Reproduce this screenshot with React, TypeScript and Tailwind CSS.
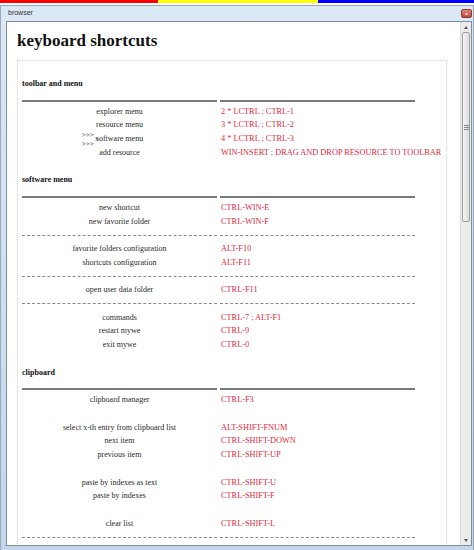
const serif = { fontFamily: '"Liberation Serif", "Times New Roman", serif' }

type Row = { kind: 'row'; label: string; keys: string; arrows?: boolean } | { kind: 'dash' } | { kind: 'blank' }

const sections: { title: string; rows: Row[] }[] = [
  {
    title: 'toolbar and menu',
    rows: [
      { kind: 'row', label: 'explorer menu', keys: '2 * LCTRL ; CTRL-1' },
      { kind: 'row', label: 'resource menu', keys: '3 * LCTRL ; CTRL-2' },
      { kind: 'row', label: 'software menu', keys: '4 * LCTRL ; CTRL-3', arrows: true },
      { kind: 'row', label: 'add resource', keys: 'WIN-INSERT ; DRAG AND DROP RESOURCE TO TOOLBAR' },
    ],
  },
  {
    title: 'software menu',
    rows: [
      { kind: 'row', label: 'new shortcut', keys: 'CTRL-WIN-E' },
      { kind: 'row', label: 'new favorite folder', keys: 'CTRL-WIN-F' },
      { kind: 'dash' },
      { kind: 'row', label: 'favorite folders configuration', keys: 'ALT-F10' },
      { kind: 'row', label: 'shortcuts configuration', keys: 'ALT-F11' },
      { kind: 'dash' },
      { kind: 'row', label: 'open user data folder', keys: 'CTRL-F11' },
      { kind: 'dash' },
      { kind: 'row', label: 'commands', keys: 'CTRL-7 ; ALT-F1' },
      { kind: 'row', label: 'restart mywe', keys: 'CTRL-9' },
      { kind: 'row', label: 'exit mywe', keys: 'CTRL-0' },
    ],
  },
  {
    title: 'clipboard',
    rows: [
      { kind: 'row', label: 'clipboard manager', keys: 'CTRL-F3' },
      { kind: 'blank' },
      { kind: 'row', label: 'select x-th entry from clipboard list', keys: 'ALT-SHIFT-FNUM' },
      { kind: 'row', label: 'next item', keys: 'CTRL-SHIFT-DOWN' },
      { kind: 'row', label: 'previous item', keys: 'CTRL-SHIFT-UP' },
      { kind: 'blank' },
      { kind: 'row', label: 'paste by indexes as text', keys: 'CTRL-SHIFT-U' },
      { kind: 'row', label: 'paste by indexes', keys: 'CTRL-SHIFT-F' },
      { kind: 'blank' },
      { kind: 'row', label: 'clear list', keys: 'CTRL-SHIFT-L' },
      { kind: 'dash' },
    ],
  },
]

function ShortcutRow({ row }: { row: Row }) {
  if (row.kind === 'blank') return <div className="h-[13.7px]" />
  if (row.kind === 'dash')
    return (
      <div className="grid grid-cols-[195px_195px] gap-x-[3px] h-[13.7px] items-center">
        <div className="border-t border-dashed border-[#8a8a8a]" />
        <div className="border-t border-dashed border-[#8a8a8a]" />
      </div>
    )
  return (
    <div className="grid grid-cols-[195px_195px] gap-x-[3px] h-[13.7px] leading-[13.7px] text-[8px]">
      <div className="relative text-center text-[#2a2a2a] whitespace-nowrap">
        {row.label}
        {row.arrows && (
          <>
            <span className="absolute left-[60px] top-[-3px] text-[7px] text-[#2a2a2a]">&gt;&gt;&gt;</span>
            <span className="absolute left-[73px] top-[1px] text-[7px] text-[#2a2a2a]">&gt;</span>
            <span className="absolute left-[60px] top-[6px] text-[7px] text-[#2a2a2a]">&gt;&gt;&gt;</span>
          </>
        )}
      </div>
      <div className="pl-px text-[8.3px] text-[#e0283a] whitespace-nowrap">{row.keys}</div>
    </div>
  )
}

function Section({ title, rows }: { title: string; rows: Row[] }) {
  return (
    <div className="mb-[14px]">
      <div className="text-[8px] font-bold leading-[13.7px] text-[#111]">{title}</div>
      <div className="grid grid-cols-[195px_195px] gap-x-[3px] mt-[9px] mb-[3px]">
        <div className="h-[2px] bg-[#7a7a7a]" />
        <div className="h-[2px] bg-[#7a7a7a]" />
      </div>
      {rows.map((r, i) => (
        <ShortcutRow key={i} row={r} />
      ))}
    </div>
  )
}

function Scrollbar() {
  return (
    <div className="w-[11px] flex flex-col bg-[#ececec] border-l border-[#dadada]">
      <div className="h-[10px] flex items-center justify-center">
        <div className="w-0 h-0 border-x-[2px] border-x-transparent border-b-[3px] border-b-[#555]" />
      </div>
      <div className="mx-px h-[190px] rounded-[2px] border border-[#9e9e9e] bg-gradient-to-r from-[#f4f4f4] to-[#dcdcdc] flex flex-col items-center justify-center gap-px">
        <div className="w-[5px] h-px bg-[#888]" />
        <div className="w-[5px] h-px bg-[#888]" />
        <div className="w-[5px] h-px bg-[#888]" />
      </div>
      <div className="flex-1" />
      <div className="h-[10px] flex items-center justify-center">
        <div className="w-0 h-0 border-x-[2px] border-x-transparent border-t-[3px] border-t-[#555]" />
      </div>
    </div>
  )
}

export default function App() {
  return (
    <div className="w-[474px] h-[550px] bg-[#eef2f7] overflow-hidden">
      <div className="flex h-[3px]">
        <div className="w-[158px] bg-[#ff0000]" />
        <div className="w-[160px] bg-[#ffff00]" />
        <div className="flex-1 bg-[#0000ff]" />
      </div>
      <div className="h-[2px] bg-white" />
      <div className="h-[545px] border-t border-x border-[#9aa8b8] bg-gradient-to-b from-[#dbe8f6] via-[#cfe0f3] to-[#c4d6ea] pl-[5px] pr-[1px] pb-[4px] flex flex-col">
        <div className="h-[15px] flex items-center justify-between pl-[2px]">
          <span className="text-[7px] text-[#333]" style={{ fontFamily: '"Liberation Sans", Arial, sans-serif' }}>
            browser
          </span>
          <div className="w-[11px] h-[9px] rounded-[2px] bg-gradient-to-b from-[#e0877a] to-[#c0443a] border border-[#8f3a33] flex items-center justify-center text-[6px] leading-none text-white font-bold">
            ×
          </div>
        </div>
        <div className="flex-1 flex border border-[#7e8ea0] min-h-0">
          <div className="flex-1 bg-white overflow-hidden pl-[10px] pr-[13px] pt-[9px]" style={serif}>
            <h1 className="text-[17px] font-bold leading-[20px] text-[#111]">keyboard shortcuts</h1>
            <div className="mt-[9px] border border-dotted border-[#d6d6d6] pl-[4px] pt-[16px] h-[600px]">
              {sections.map((s) => (
                <Section key={s.title} title={s.title} rows={s.rows} />
              ))}
            </div>
          </div>
          <Scrollbar />
        </div>
      </div>
    </div>
  )
}
